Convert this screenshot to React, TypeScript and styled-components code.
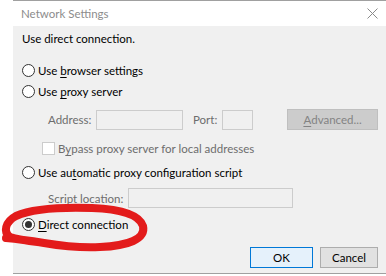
import styled, { createGlobalStyle } from "styled-components";

const GlobalStyle = createGlobalStyle`
  html, body {
    margin: 0;
    padding: 0;
    background: #ffffff;
  }
  body {
    font-family: Lato, "Liberation Sans", sans-serif;
    font-size: 11.5px;
  }
`;

const Page = styled.div`
  position: relative;
  width: 386px;
  height: 276px;
  overflow: hidden;
  background: #ffffff;
`;

const Window = styled.div`
  margin-left: 13px;
  width: 373px;
  height: 274px;
  border-top: 1px solid #a0a0a0;
  border-bottom: 1px solid #a0a0a0;
  box-sizing: border-box;
  display: flex;
  flex-direction: column;
`;

const TitleBar = styled.div`
  height: 25px;
  flex: none;
  display: flex;
  align-items: center;
  justify-content: space-between;
  padding: 0 8px 0 8px;
  background: #ffffff;
  color: #8c8c8c;
`;

const Panel = styled.div`
  flex: 1;
  background: #f0f0f0;
  padding: 5px 8px 5px 9px;
  display: flex;
  flex-direction: column;
  color: #000000;
`;

const Heading = styled.div`
  height: 16px;
  line-height: 16px;
`;

const Row = styled.div<{ $top: number; $height?: number; $indent?: number }>`
  display: flex;
  align-items: center;
  margin-top: ${(p) => p.$top}px;
  height: ${(p) => p.$height ?? 21}px;
  padding-left: ${(p) => p.$indent ?? 0}px;
  flex: none;
`;

const Radio = styled.span<{ $checked?: boolean }>`
  width: 13px;
  height: 13px;
  box-sizing: border-box;
  border: 1px solid #333333;
  border-radius: 50%;
  background: #ffffff;
  display: inline-flex;
  align-items: center;
  justify-content: center;
  margin-right: 3px;
  flex: none;
  &::after {
    content: "";
    display: ${(p) => (p.$checked ? "block" : "none")};
    width: 7px;
    height: 7px;
    border-radius: 50%;
    background: #333333;
  }
`;

const Check = styled.span`
  width: 13px;
  height: 13px;
  box-sizing: border-box;
  border: 1px solid #cccccc;
  background: #ffffff;
  margin-right: 3px;
  flex: none;
`;

const Label = styled.span<{ $disabled?: boolean }>`
  color: ${(p) => (p.$disabled ? "#6d6d6d" : "#000000")};
  white-space: nowrap;
`;

const FieldLabel = styled.span<{ $width: number; $right?: boolean; $gap?: number }>`
  width: ${(p) => p.$width}px;
  margin-left: ${(p) => p.$gap ?? 0}px;
  color: #6d6d6d;
  text-align: ${(p) => (p.$right ? "right" : "left")};
  white-space: nowrap;
  flex: none;
`;

const Input = styled.span<{ $width: number; $gap?: number }>`
  width: ${(p) => p.$width}px;
  height: 20px;
  margin-left: ${(p) => p.$gap ?? 0}px;
  box-sizing: border-box;
  border: 1px solid #cccccc;
  background: #f0f0f0;
  flex: none;
`;

const Key = styled.span`
  text-decoration: underline;
  text-underline-offset: 2px;
`;

const AdvancedButton = styled.span`
  margin-left: 34px;
  width: 91px;
  height: 21px;
  box-sizing: border-box;
  border: 1px solid #bfbfbf;
  background: #cccccc;
  color: #838383;
  display: flex;
  align-items: center;
  justify-content: center;
  flex: none;
`;

const Footer = styled.div`
  margin-top: auto;
  display: flex;
  justify-content: flex-end;
  gap: 7px;
`;

const Button = styled.span<{ $primary?: boolean; $width: number }>`
  width: ${(p) => p.$width}px;
  height: 21px;
  box-sizing: border-box;
  border: 1px solid ${(p) => (p.$primary ? "#0078d7" : "#adadad")};
  background: ${(p) => (p.$primary ? "#e5f1fb" : "#e1e1e1")};
  display: flex;
  align-items: center;
  justify-content: center;
  color: #000000;
`;

const Scribble = styled.svg`
  position: absolute;
  left: 0;
  top: 0;
  pointer-events: none;
`;

const CloseIcon = () => (
  <svg width="11" height="11" viewBox="0 0 11 11">
    <path d="M0.5 0.5 L10.5 10.5 M10.5 0.5 L0.5 10.5" stroke="#8a8a8a" strokeWidth="1" fill="none" />
  </svg>
);

export default function App() {
  return (
    <Page>
      <GlobalStyle />
      <Window>
        <TitleBar>
          <span>Network Settings</span>
          <CloseIcon />
        </TitleBar>
        <Panel>
          <Heading>Use direct connection.</Heading>

          <Row $top={13}>
            <Radio />
            <Label>
              Use <Key>b</Key>rowser settings
            </Label>
          </Row>
          <Row $top={0}>
            <Radio />
            <Label>
              Use <Key>p</Key>roxy server
            </Label>
          </Row>

          <Row $top={7} $indent={26}>
            <FieldLabel $width={48}>Address:</FieldLabel>
            <Input $width={87} />
            <FieldLabel $width={29} $gap={10}>
              Port:
            </FieldLabel>
            <Input $width={31} />
            <AdvancedButton>
              <Key>A</Key>dvanced...
            </AdvancedButton>
          </Row>

          <Row $top={8} $height={20} $indent={20}>
            <Check />
            <Label $disabled>
              B<Key>y</Key>pass proxy server for local addresses
            </Label>
          </Row>

          <Row $top={4}>
            <Radio />
            <Label>
              Use au<Key>t</Key>omatic proxy configuration script
            </Label>
          </Row>

          <Row $top={5} $height={20} $indent={26}>
            <FieldLabel $width={70} $right>
              Script location:
            </FieldLabel>
            <Input $width={165} $gap={10} />
          </Row>

          <Row $top={6}>
            <Radio $checked />
            <Label>
              <Key>D</Key>irect connection
            </Label>
          </Row>

          <Footer>
            <Button $primary $width={63}>
              OK
            </Button>
            <Button $width={58}>Cancel</Button>
          </Footer>
        </Panel>
      </Window>
      <Scribble width="386" height="276" viewBox="0 0 386 276">
        <path
          d="M58 245 C40 242 22 241 10 237 C3 232 5 222 16 216 C34 208 62 207 92 208 C118 209 139 214 143 226 C146 239 128 246 100 247 C80 248 62 246 44 243 C32 241 18 239 6 238"
          stroke="#e31b1b"
          strokeWidth="8"
          strokeLinecap="round"
          strokeLinejoin="round"
          fill="none"
        />
      </Scribble>
    </Page>
  );
}
